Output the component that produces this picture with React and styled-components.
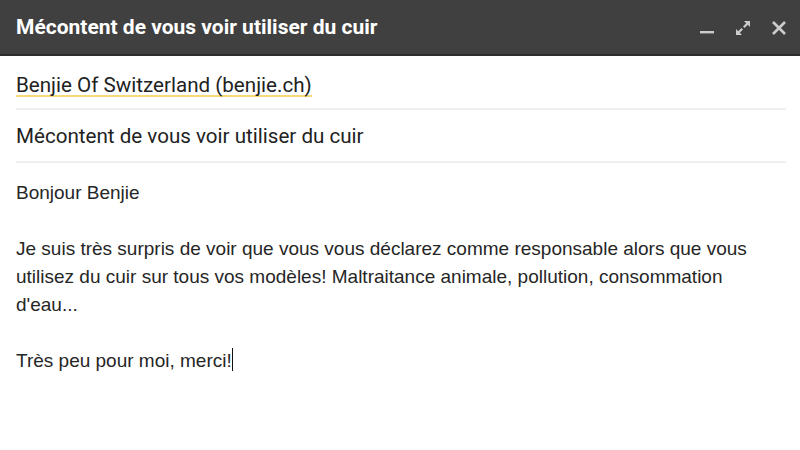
import React from "react";
import styled, { createGlobalStyle } from "styled-components";

const GlobalStyle = createGlobalStyle`
  html, body {
    margin: 0;
    padding: 0;
    background: #ffffff;
  }
  #root {
    width: 800px;
    height: 450px;
    overflow: hidden;
  }
`;

const Window = styled.div`
  width: 800px;
  height: 450px;
  background: #fff;
  display: flex;
  flex-direction: column;
`;

const TitleBar = styled.div`
  height: 54px;
  background: #404040;
  border-bottom: 2px solid #2e2e2e;
  display: flex;
  align-items: center;
  justify-content: space-between;
  padding: 0 12px 0 16px;
`;

const Title = styled.h1`
  margin: 0;
  font-family: Roboto, "Liberation Sans", sans-serif;
  font-weight: 700;
  font-size: 21px;
  color: #ffffff;
`;

const Controls = styled.div`
  display: flex;
  align-items: center;
  gap: 18px;
  padding-top: 2px;
`;

const IconButton = styled.span`
  width: 18px;
  height: 18px;
  display: flex;
  align-items: center;
  justify-content: center;
  color: #cccccc;
`;

const Fields = styled.div`
  padding: 0 14px 0 16px;
`;

const FieldRow = styled.div`
  height: ${({ $h }) => $h}px;
  border-bottom: 2px solid #eef0f0;
  display: flex;
  align-items: center;
  font-family: Roboto, "Liberation Sans", sans-serif;
  font-size: 20.6px;
  color: #222;
`;

const Recipient = styled.span`
  display: inline-block;
  line-height: 19px;
  margin-top: 9px;
  border-bottom: 2px solid #f8d978;
`;

const Body = styled.div`
  padding: 16px 16px 0 16px;
  font-family: "Liberation Sans", Arial, sans-serif;
  font-size: 19px;
  line-height: 28px;
  color: #262626;

  p {
    margin: 0 0 28px 0;
  }
`;

const Caret = styled.span`
  display: inline-block;
  width: 1.5px;
  height: 23px;
  background: #111;
  vertical-align: -4px;
`;

const Minimize = () => (
  <svg width="16" height="16" viewBox="0 0 16 16">
    <rect x="1" y="11" width="14" height="2.4" fill="currentColor" />
  </svg>
);

const Expand = () => (
  <svg width="18" height="18" viewBox="0 0 18 18" fill="currentColor">
    <path d="M10 2h6v6l-2.2-2.2-3.2 3.2-1.6-1.6 3.2-3.2z" />
    <path d="M8 16H2v-6l2.2 2.2 3.2-3.2 1.6 1.6-3.2 3.2z" />
  </svg>
);

const Close = () => (
  <svg width="16" height="16" viewBox="0 0 16 16">
    <path d="M2 2l12 12M14 2L2 14" stroke="currentColor" strokeWidth="2.6" />
  </svg>
);

const App = () => (
  <>
    <GlobalStyle />
    <Window>
      <TitleBar>
        <Title>Mécontent de vous voir utiliser du cuir</Title>
        <Controls>
          <IconButton><Minimize /></IconButton>
          <IconButton><Expand /></IconButton>
          <IconButton><Close /></IconButton>
        </Controls>
      </TitleBar>
      <Fields>
        <FieldRow $h={52}>
          <Recipient>Benjie Of Switzerland (benjie.ch)</Recipient>
        </FieldRow>
        <FieldRow $h={51}>Mécontent de vous voir utiliser du cuir</FieldRow>
      </Fields>
      <Body>
        <p>Bonjour Benjie</p>
        <p>
          Je suis très surpris de voir que vous vous déclarez comme responsable alors que vous
          utilisez du cuir sur tous vos modèles! Maltraitance animale, pollution, consommation
          d'eau...
        </p>
        <p>
          Très peu pour moi, merci!<Caret />
        </p>
      </Body>
    </Window>
  </>
);

export default App;
